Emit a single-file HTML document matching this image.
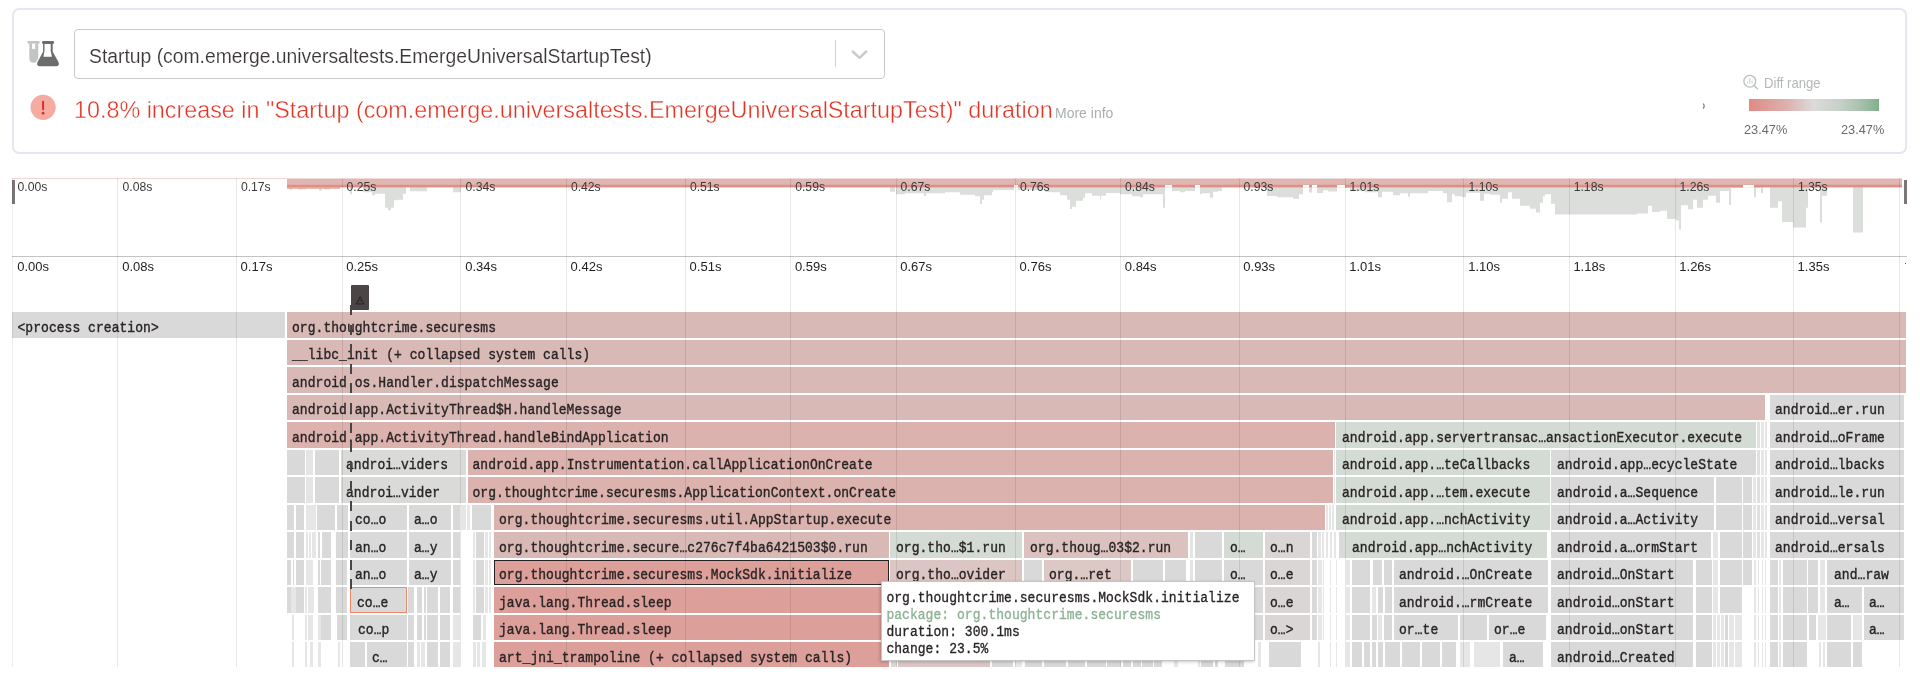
<!DOCTYPE html>
<html><head><meta charset="utf-8">
<style>
*{box-sizing:border-box}
html,body{margin:0;padding:0;background:#fff}
body{width:1920px;height:675px;overflow:hidden;position:relative;font-family:"Liberation Sans",sans-serif}
#root{position:absolute;left:0;top:0;width:1920px;height:675px;overflow:hidden;will-change:transform}
.abs{position:absolute}
.b{position:absolute;height:25.5px;overflow:hidden}
.ml{position:absolute;top:179.5px;font-size:12.2px;line-height:14px;color:#3a3a3a;white-space:pre}
.tl{position:absolute;top:259px;font-size:13px;line-height:16px;color:#222;white-space:pre}
.tt{position:absolute;left:886.4px;font-family:"Liberation Mono",monospace;font-size:13px;line-height:17.3px;color:#2a2525;white-space:pre;letter-spacing:0.045px;-webkit-text-stroke:0.3px currentColor;transform:scaleY(1.1);transform-origin:0 13px}
.b span{position:absolute;top:3.6px;letter-spacing:0.045px;-webkit-text-stroke:0.35px #2a2525;line-height:25.5px;transform:scaleY(1.12);transform-origin:0 19px;font-family:"Liberation Mono",monospace;font-size:13px;color:#2a2525;white-space:pre}
</style></head><body><div id="root">
<!-- header card -->
<div class="abs" style="left:12px;top:8px;width:1895px;height:145.5px;border:2px solid #e2e7f0;border-radius:7px;background:#fff"></div>
<div class="abs" style="left:73.5px;top:29px;width:811px;height:49.5px;border:1.3px solid #c9c9c9;border-radius:4px;background:#fff"></div>
<div class="abs" style="left:88.5px;top:43px;font-size:20px;line-height:26px;color:#3b3737;white-space:pre;-webkit-text-stroke:0.15px #fff;transform:scaleX(0.966);transform-origin:0 0">Startup (com.emerge.universaltests.EmergeUniversalStartupTest)</div>
<div class="abs" style="left:835px;top:40px;width:1.3px;height:27px;background:#cfcfcf"></div>
<svg class="abs" style="left:850px;top:48px" width="20" height="14"><path d="M2.8 3.5 L9.5 9.8 L16.2 3.5" fill="none" stroke="#cbcbcb" stroke-width="2.5" stroke-linecap="round" stroke-linejoin="round"/></svg>
<div class="abs" style="left:74px;top:95px;font-size:24px;line-height:30px;color:#e23424;white-space:pre;-webkit-text-stroke:0.4px #fff;transform:scaleX(0.972);transform-origin:0 0">10.8% increase in "Startup (com.emerge.universaltests.EmergeUniversalStartupTest)" duration</div>
<div class="abs" style="left:1055px;top:104px;font-size:14px;line-height:18px;color:#a9aeae;white-space:pre;transform:scaleX(1.0);transform-origin:0 0">More info</div>
<svg class="abs" style="left:22px;top:34px" width="44" height="38" viewBox="0 0 44 38">
<rect x="5.4" y="7" width="12.3" height="2.7" rx="1.2" fill="#c3c5c5"/>
<path d="M7.3 9.6 L16.3 9.6 L16.3 24.5 Q16.3 28.7 11.8 28.7 Q7.3 28.7 7.3 24.5 Z" fill="#c3c5c5"/>
<rect x="10.1" y="9.6" width="3.1" height="5.3" fill="#fff"/>
<path d="M21.1 9.8 L30.7 9.8 L30.7 17.7 L36.6 28.2 Q37.8 32.2 34 32.2 L18 32.2 Q14.2 32.2 15.4 28.2 L21.1 17.7 Z" fill="#fff" stroke="#fff" stroke-width="2.4"/>
<path d="M21.1 9.8 L30.7 9.8 L30.7 17.7 L36.6 28.2 Q37.8 32.2 34 32.2 L18 32.2 Q14.2 32.2 15.4 28.2 L21.1 17.7 Z" fill="#6b6c6d"/>
<rect x="20" y="7" width="12.1" height="2.9" rx="1.3" fill="#6b6c6d"/>
<path d="M22.5 9.9 L28.7 9.9 L28.7 17 L29.9 22.8 L21.4 22.8 L22.5 17 Z" fill="#fff"/>
</svg>
<svg class="abs" style="left:26px;top:90px" width="36" height="34">
<circle cx="17.1" cy="17.3" r="12.6" fill="#f5aaa2"/>
<path d="M17.1 11.6 L17.1 19.2" stroke="#e3281c" stroke-width="1.9" stroke-linecap="round"/>
<circle cx="17.1" cy="23.2" r="1.35" fill="#e3281c"/>
</svg>
<svg class="abs" style="left:1690px;top:66px" width="210" height="50">
<circle cx="59.8" cy="15.2" r="5.9" fill="none" stroke="#b9c0bd" stroke-width="1.3"/>
<path d="M64 19.5 L67.5 22.7" stroke="#b9c0bd" stroke-width="1.5" stroke-linecap="round"/>
<path d="M59.8 12 L59.8 17.5 M57.5 15.5 L57.5 17.5 M62 14.5 L62 17.5" stroke="#c8cecb" stroke-width="1"/>
<path d="M13.2 37.5 Q15.3 40 13.2 42.6" fill="none" stroke="#7a7a7a" stroke-width="1.1"/>
</svg>
<div class="abs" style="left:1763.5px;top:72.7px;font-size:14.5px;line-height:20px;color:#b3b8b7;white-space:pre;transform:scaleX(0.904);transform-origin:0 0">Diff range</div>
<div class="abs" style="left:1748.6px;top:98.9px;width:130.6px;height:12.5px;background:linear-gradient(to right,#e08a83 0%,#dcb3b0 30%,#dcdbda 50%,#c6d0c8 70%,#aac2ae 85%,#82b08b 100%)"></div>
<div class="abs" style="left:1743.5px;top:121px;font-size:13.3px;line-height:18px;color:#6a6a6a;white-space:pre;transform:scaleX(0.96);transform-origin:0 0">23.47%</div>
<div class="abs" style="left:1840.8px;top:121px;font-size:13.3px;line-height:18px;color:#6a6a6a;white-space:pre;transform:scaleX(0.96);transform-origin:0 0">23.47%</div>
<svg class="abs" style="left:0;top:0" width="1920" height="260">
<path d="M287 186 H300 V188.8 H287 Z M300 186 H305 V188.2 H300 Z M305 186 H319 V188.8 H305 Z M319 186 H322 V190.4 H319 Z M322 186 H340 V188.5 H322 Z M350 186 H352 V194.3 H350 Z M363 186 H372 V192.3 H363 Z M372 186 H375 V195.3 H372 Z M375 186 H385 V193.8 H375 Z M385 186 H388 V207.7 H385 Z M388 186 H391 V210.2 H388 Z M391 186 H394 V207.7 H391 Z M394 186 H398 V200.3 H394 Z M398 186 H403 V199.8 H398 Z M403 186 H406 V193.8 H403 Z M410 186 H427 V191.3 H410 Z M453 186 H461 V192.3 H453 Z M890 186 H895 V191.8 H890 Z M896 186 H905 V194.3 H896 Z M905 186 H924 V193.3 H905 Z M924 186 H926 V196 H924 Z M926 186 H945 V193.3 H926 Z M945 186 H960 V192.3 H945 Z M960 186 H975 V194.8 H960 Z M975 186 H980 V196.3 H975 Z M980 186 H982 V204 H980 Z M982 186 H984 V199.8 H982 Z M984 186 H992 V195.3 H984 Z M992 186 H993 V192.3 H992 Z M993 186 H1014 V189.9 H993 Z M1018 186 H1045 V189.9 H1018 Z M1045 186 H1050 V192 H1045 Z M1050 186 H1060 V192.3 H1050 Z M1060 186 H1067 V195.3 H1060 Z M1067 186 H1070 V199.8 H1067 Z M1070 186 H1072 V209 H1070 Z M1072 186 H1076 V206.7 H1072 Z M1076 186 H1083 V200.8 H1076 Z M1083 186 H1085 V197.8 H1083 Z M1085 186 H1092 V193.3 H1085 Z M1092 186 H1100 V195.8 H1092 Z M1100 186 H1101 V199 H1100 Z M1101 186 H1106 V195.8 H1101 Z M1106 186 H1120 V193 H1106 Z M1120 186 H1132 V194.3 H1120 Z M1132 186 H1140 V196.3 H1132 Z M1140 186 H1143 V197.3 H1140 Z M1143 186 H1163 V194.3 H1143 Z M1163 186 H1165 V207.7 H1163 Z M1172 186 H1180 V190.9 H1172 Z M1180 186 H1185 V192.3 H1180 Z M1185 186 H1195 V190.9 H1185 Z M1200 186 H1202 V194.3 H1200 Z M1202 186 H1210 V193.3 H1202 Z M1210 186 H1213 V197.8 H1210 Z M1213 186 H1218 V191.8 H1213 Z M1218 186 H1222 V190.9 H1218 Z M1267 186 H1277 V196 H1267 Z M1277 186 H1293 V197.3 H1277 Z M1293 186 H1299 V198.7 H1293 Z M1299 186 H1303 V194.2 H1299 Z M1309 186 H1312 V192.4 H1309 Z M1317 186 H1323 V192.9 H1317 Z M1323 186 H1328 V190.2 H1323 Z M1328 186 H1337 V191.5 H1328 Z M1345 186 H1350 V188 H1345 Z M1350 186 H1365 V190.9 H1350 Z M1365 186 H1378 V192.3 H1365 Z M1378 186 H1382 V197.3 H1378 Z M1382 186 H1393 V191.8 H1382 Z M1393 186 H1400 V195.3 H1393 Z M1400 186 H1408 V193.3 H1400 Z M1408 186 H1410 V196.8 H1408 Z M1410 186 H1428 V193.3 H1410 Z M1428 186 H1443 V190.9 H1428 Z M1443 186 H1447 V193.3 H1443 Z M1447 186 H1452 V202.2 H1447 Z M1452 186 H1455 V194.3 H1452 Z M1455 186 H1462 V196.3 H1455 Z M1462 186 H1466 V197.3 H1462 Z M1466 186 H1480 V192.8 H1466 Z M1480 186 H1484 V200.8 H1480 Z M1484 186 H1490 V193.8 H1484 Z M1490 186 H1500 V194.8 H1490 Z M1500 186 H1502 V202.7 H1500 Z M1502 186 H1508 V198.8 H1502 Z M1508 186 H1512 V192.3 H1508 Z M1512 186 H1520 V198.8 H1512 Z M1520 186 H1530 V205.7 H1520 Z M1530 186 H1536 V208.7 H1530 Z M1536 186 H1540 V212.6 H1536 Z M1540 186 H1543 V202.7 H1540 Z M1543 186 H1545 V196.3 H1543 Z M1545 186 H1551 V194.3 H1545 Z M1551 186 H1555 V203.7 H1551 Z M1555 186 H1637 V214.6 H1555 Z M1637 186 H1648 V213.6 H1637 Z M1648 186 H1652 V205.7 H1648 Z M1652 186 H1660 V212.1 H1652 Z M1660 186 H1667 V210.7 H1660 Z M1667 186 H1676 V219 H1667 Z M1676 186 H1679 V220.5 H1676 Z M1679 186 H1681 V229.5 H1679 Z M1681 186 H1688 V205.2 H1681 Z M1688 186 H1693 V209.2 H1688 Z M1693 186 H1697 V199.8 H1693 Z M1697 186 H1703 V207.7 H1697 Z M1703 186 H1708 V199.8 H1703 Z M1708 186 H1716 V195.8 H1708 Z M1716 186 H1720 V202.7 H1716 Z M1720 186 H1729 V190.9 H1720 Z M1729 186 H1731 V205 H1729 Z M1731 186 H1743 V188 H1731 Z M1754 186 H1756 V197.3 H1754 Z M1756 186 H1760 V188 H1756 Z M1761 186 H1763 V193.3 H1761 Z M1770 186 H1778 V207.7 H1770 Z M1778 186 H1782 V201.2 H1778 Z M1782 186 H1793 V222 H1782 Z M1793 186 H1806 V227.5 H1793 Z M1806 186 H1808 V207.7 H1806 Z M1808 186 H1820 V188 H1808 Z M1820 186 H1822 V222.5 H1820 Z M1822 186 H1827 V195.8 H1822 Z M1853 186 H1863 V232.4 H1853 Z " fill="#dcdedc"/>
<rect x="287" y="178.5" width="1615" height="6.8" fill="#e0b6b3"/>
<rect x="287" y="184.8" width="1615" height="2.6" fill="#e08f86"/>
<rect x="287" y="187.3" width="53" height="1.3" fill="#e6a29b"/><rect x="289" y="188.4" width="3" height="0.9" fill="#e6a29b"/><rect x="298" y="188.4" width="8" height="0.8" fill="#e6a29b"/><rect x="324" y="188.4" width="6" height="0.8" fill="#e6a29b"/>
<rect x="12" y="178" width="275" height="1" fill="#f2d6d3"/>
<rect x="1014" y="185" width="4" height="2.6" fill="#fff"/><rect x="1165" y="185" width="7" height="2.6" fill="#fff"/><rect x="1195" y="185" width="5" height="2.6" fill="#fff"/><rect x="1303" y="185" width="6" height="2.6" fill="#fff"/><rect x="1312" y="185" width="5" height="2.6" fill="#fff"/><rect x="1337" y="185" width="8" height="2.6" fill="#fff"/><rect x="1743" y="185" width="11" height="2.6" fill="#fff"/>
</svg>
<div class="ml" style="left:17.5px">0.00s</div><div class="ml" style="left:122.5px">0.08s</div><div class="ml" style="left:240.9px">0.17s</div><div class="ml" style="left:346.5px">0.25s</div><div class="ml" style="left:465.5px">0.34s</div><div class="ml" style="left:570.9px">0.42s</div><div class="ml" style="left:689.9px">0.51s</div><div class="ml" style="left:795.1999999999999px">0.59s</div><div class="ml" style="left:900.5px">0.67s</div><div class="ml" style="left:1019.9px">0.76s</div><div class="ml" style="left:1125.1000000000001px">0.84s</div><div class="ml" style="left:1243.6000000000001px">0.93s</div><div class="ml" style="left:1349.5px">1.01s</div><div class="ml" style="left:1468.5px">1.10s</div><div class="ml" style="left:1573.7px">1.18s</div><div class="ml" style="left:1679.6000000000001px">1.26s</div><div class="ml" style="left:1797.9px">1.35s</div>
<div class="abs" style="left:12px;top:255.5px;width:1895px;height:1.2px;background:#c3c3c3"></div>
<div class="tl" style="left:17.2px">0.00s</div><div class="tl" style="left:122.19999999999999px">0.08s</div><div class="tl" style="left:240.6px">0.17s</div><div class="tl" style="left:346.20000000000005px">0.25s</div><div class="tl" style="left:465.20000000000005px">0.34s</div><div class="tl" style="left:570.6px">0.42s</div><div class="tl" style="left:689.6px">0.51s</div><div class="tl" style="left:794.9px">0.59s</div><div class="tl" style="left:900.2px">0.67s</div><div class="tl" style="left:1019.6px">0.76s</div><div class="tl" style="left:1124.8px">0.84s</div><div class="tl" style="left:1243.3px">0.93s</div><div class="tl" style="left:1349.1999999999998px">1.01s</div><div class="tl" style="left:1468.1999999999998px">1.10s</div><div class="tl" style="left:1573.3999999999999px">1.18s</div><div class="tl" style="left:1679.3px">1.26s</div><div class="tl" style="left:1797.6px">1.35s</div>
<div class="abs" style="left:12px;top:179.5px;width:3px;height:24px;background:#7a7676"></div>
<div class="abs" style="left:1904.8px;top:262.5px;width:1.6px;height:1.4px;background:#555"></div>
<div class="abs" style="left:1903.5px;top:179.5px;width:3px;height:24px;background:#7a7676"></div>
<div class="abs" style="left:0;top:312px;width:1920px;height:355px;overflow:hidden">
<div class="abs" style="left:0;top:-312px;width:1920px;height:700px">
<div class="b" style="left:12px;top:312.0px;width:273px;background:#d9d9d9;"><span style="left:5.5px">&lt;process creation&gt;</span></div><div class="b" style="left:287px;top:312.0px;width:1618.5px;background:#d9b9b6;"><span style="left:5px">org.thoughtcrime.securesms</span></div><div class="b" style="left:287px;top:339.5px;width:1618.5px;background:#d9b9b6;"><span style="left:5px">__libc_init (+ collapsed system calls)</span></div><div class="b" style="left:287px;top:367.0px;width:1618.5px;background:#d9b9b6;"><span style="left:5px">android.os.Handler.dispatchMessage</span></div><div class="b" style="left:287px;top:394.5px;width:1478px;background:#d9b9b6;"><span style="left:5px">android.app.ActivityThread$H.handleMessage</span></div><div class="b" style="left:1769.5px;top:394.5px;width:134.5px;background:#d9d9d9;"><span style="left:5.5px">android…er.run</span></div><div class="b" style="left:287px;top:422.0px;width:1048px;background:#dbb2ad;"><span style="left:5px">android.app.ActivityThread.handleBindApplication</span></div><div class="b" style="left:1335.5px;top:422.0px;width:420.5px;background:#d4dbd5;"><span style="left:6.5px">android.app.servertransac…ansactionExecutor.execute</span></div><div class="b" style="left:1769.5px;top:422.0px;width:134.5px;background:#d9d9d9;"><span style="left:5.5px">android…oFrame</span></div><div class="b" style="left:287px;top:449.5px;width:18px;background:#d9d9d9;"></div><div class="b" style="left:306px;top:449.5px;width:7px;background:#e4e4e4;"></div><div class="b" style="left:315px;top:449.5px;width:24px;background:#d9d9d9;"></div><div class="b" style="left:340.5px;top:449.5px;width:125.5px;background:#dadbd9;"><span style="left:5.5px">androi…viders</span></div><div class="b" style="left:287px;top:477.0px;width:18px;background:#d9d9d9;"></div><div class="b" style="left:306px;top:477.0px;width:7px;background:#e4e4e4;"></div><div class="b" style="left:315px;top:477.0px;width:24px;background:#d9d9d9;"></div><div class="b" style="left:340.5px;top:477.0px;width:125.5px;background:#dadbd9;"><span style="left:5.5px">androi…vider</span></div><div class="b" style="left:467.5px;top:449.5px;width:865.5px;background:#dbb2ad;"><span style="left:5.0px">android.app.Instrumentation.callApplicationOnCreate</span></div><div class="b" style="left:467.5px;top:477.0px;width:865.5px;background:#dbb2ad;"><span style="left:5.0px">org.thoughtcrime.securesms.ApplicationContext.onCreate</span></div><div class="b" style="left:1335.5px;top:449.5px;width:214.0px;background:#d4dbd5;"><span style="left:6.5px">android.app.…teCallbacks</span></div><div class="b" style="left:1335.5px;top:477.0px;width:214.0px;background:#d4dbd5;"><span style="left:6.5px">android.app.…tem.execute</span></div><div class="b" style="left:1335.5px;top:504.5px;width:214.0px;background:#d4dbd5;"><span style="left:6.5px">android.app.…nchActivity</span></div><div class="b" style="left:1550.8px;top:449.5px;width:205.20000000000005px;background:#d9d9d9;"><span style="left:6.2000000000000455px">android.app…ecycleState</span></div><div class="b" style="left:1550.8px;top:477.0px;width:163.20000000000005px;background:#d9d9d9;"><span style="left:6.2000000000000455px">android.a…Sequence</span></div><div class="b" style="left:1550.8px;top:504.5px;width:163.20000000000005px;background:#d9d9d9;"><span style="left:6.2000000000000455px">android.a…Activity</span></div><div class="b" style="left:1550.8px;top:532.0px;width:160.20000000000005px;background:#d9d9d9;"><span style="left:6.2000000000000455px">android.a…ormStart</span></div><div class="b" style="left:1550.8px;top:559.5px;width:142.70000000000005px;background:#d9d9d9;"><span style="left:6.2000000000000455px">android…OnStart</span></div><div class="b" style="left:1550.8px;top:587.0px;width:142.70000000000005px;background:#d9d9d9;"><span style="left:6.2000000000000455px">android…onStart</span></div><div class="b" style="left:1550.8px;top:614.5px;width:142.70000000000005px;background:#d9d9d9;"><span style="left:6.2000000000000455px">android…onStart</span></div><div class="b" style="left:1550.8px;top:642.0px;width:142.70000000000005px;background:#d9d9d9;"><span style="left:6.2000000000000455px">android…Created</span></div><div class="b" style="left:1769.5px;top:449.5px;width:134.5px;background:#d9d9d9;"><span style="left:5.5px">android…lbacks</span></div><div class="b" style="left:1769.5px;top:477.0px;width:134.5px;background:#d9d9d9;"><span style="left:5.5px">android…le.run</span></div><div class="b" style="left:1769.5px;top:504.5px;width:134.5px;background:#d9d9d9;"><span style="left:5.5px">android…versal</span></div><div class="b" style="left:1769.5px;top:532.0px;width:134.5px;background:#d9d9d9;"><span style="left:5.5px">android…ersals</span></div><div class="b" style="left:1827px;top:559.5px;width:77px;background:#d9d9d9;"><span style="left:7px">and…raw</span></div><div class="b" style="left:1827px;top:587.0px;width:35px;background:#d9d9d9;"><span style="left:7px">a…</span></div><div class="b" style="left:1863.5px;top:587.0px;width:40.5px;background:#d9d9d9;"><span style="left:5.5px">a…</span></div><div class="b" style="left:1863.5px;top:614.5px;width:40.5px;background:#d9d9d9;"><span style="left:5.5px">a…</span></div><div class="b" style="left:287px;top:504.5px;width:7px;background:#d9d9d9;"></div><div class="b" style="left:296px;top:504.5px;width:8px;background:#d9d9d9;"></div><div class="b" style="left:306px;top:504.5px;width:9.5px;background:#e6e6e6;"></div><div class="b" style="left:316.5px;top:504.5px;width:18.5px;background:#d9d9d9;"></div><div class="b" style="left:337px;top:504.5px;width:11px;background:#d9d9d9;"></div><div class="b" style="left:287px;top:532.0px;width:7px;background:#d9d9d9;"></div><div class="b" style="left:296px;top:532.0px;width:8px;background:#d9d9d9;"></div><div class="b" style="left:305.5px;top:532.0px;width:2.5px;background:#e6e6e6;"></div><div class="b" style="left:309px;top:532.0px;width:2px;background:#e6e6e6;"></div><div class="b" style="left:312px;top:532.0px;width:4px;background:#e6e6e6;"></div><div class="b" style="left:318px;top:532.0px;width:2px;background:#d9d9d9;"></div><div class="b" style="left:321.8px;top:532.0px;width:9.399999999999977px;background:#d9d9d9;"></div><div class="b" style="left:336px;top:532.0px;width:12px;background:#d9d9d9;"></div><div class="b" style="left:287px;top:559.5px;width:3.5px;background:#d9d9d9;"></div><div class="b" style="left:292.5px;top:559.5px;width:1.5px;background:#d9d9d9;"></div><div class="b" style="left:296px;top:559.5px;width:8px;background:#d9d9d9;"></div><div class="b" style="left:306px;top:559.5px;width:7px;background:#e6e6e6;"></div><div class="b" style="left:318px;top:559.5px;width:2px;background:#d9d9d9;"></div><div class="b" style="left:321px;top:559.5px;width:10px;background:#d9d9d9;"></div><div class="b" style="left:336px;top:559.5px;width:11px;background:#d9d9d9;"></div><div class="b" style="left:287px;top:587.0px;width:4px;background:#d9d9d9;"></div><div class="b" style="left:291px;top:587.0px;width:5px;background:#e6e6e6;"></div><div class="b" style="left:296px;top:587.0px;width:8px;background:#d9d9d9;"></div><div class="b" style="left:305px;top:587.0px;width:1.5px;background:#e6e6e6;"></div><div class="b" style="left:308px;top:587.0px;width:6px;background:#e6e6e6;"></div><div class="b" style="left:318px;top:587.0px;width:13.199999999999989px;background:#d9d9d9;"></div><div class="b" style="left:336px;top:587.0px;width:11px;background:#d9d9d9;"></div><div class="b" style="left:292px;top:614.5px;width:1.5px;background:#e6e6e6;"></div><div class="b" style="left:305px;top:614.5px;width:1.5px;background:#e6e6e6;"></div><div class="b" style="left:308px;top:614.5px;width:5px;background:#e6e6e6;"></div><div class="b" style="left:318px;top:614.5px;width:3px;background:#e6e6e6;"></div><div class="b" style="left:321px;top:614.5px;width:10px;background:#d9d9d9;"></div><div class="b" style="left:337px;top:614.5px;width:10px;background:#d9d9d9;"></div><div class="b" style="left:292px;top:642.0px;width:1.5px;background:#e6e6e6;"></div><div class="b" style="left:305px;top:642.0px;width:1.5px;background:#e6e6e6;"></div><div class="b" style="left:310px;top:642.0px;width:3px;background:#e6e6e6;"></div><div class="b" style="left:318px;top:642.0px;width:3px;background:#e6e6e6;"></div><div class="b" style="left:338px;top:642.0px;width:2px;background:#e6e6e6;"></div><div class="b" style="left:349.5px;top:504.5px;width:57.5px;background:#d9d9d9;"><span style="left:5.5px">co…o</span></div><div class="b" style="left:408.5px;top:504.5px;width:42.5px;background:#d9d9d9;"><span style="left:5.5px">a…o</span></div><div class="b" style="left:349.5px;top:532.0px;width:57.5px;background:#d9d9d9;"><span style="left:5.5px">an…o</span></div><div class="b" style="left:408.5px;top:532.0px;width:42.5px;background:#d9d9d9;"><span style="left:5.5px">a…y</span></div><div class="b" style="left:349.5px;top:559.5px;width:57.5px;background:#d9d9d9;"><span style="left:5.5px">an…o</span></div><div class="b" style="left:408.5px;top:559.5px;width:42.5px;background:#d9d9d9;"><span style="left:5.5px">a…y</span></div><div class="b" style="left:349.5px;top:587.0px;width:57.5px;background:#d9d9d9;outline:1.8px solid #f2876c;outline-offset:-1px;"><span style="left:7.5px">co…e</span></div><div class="b" style="left:349.5px;top:614.5px;width:57.5px;background:#d9d9d9;"><span style="left:8.5px">co…p</span></div><div class="b" style="left:349.5px;top:642.0px;width:15.5px;background:#d9d9d9;"></div><div class="b" style="left:367px;top:642.0px;width:40px;background:#d9d9d9;"><span style="left:5px">c…</span></div><div class="b" style="left:408.2px;top:587.0px;width:5.900000000000034px;background:#d9d9d9;"></div><div class="b" style="left:416.5px;top:587.0px;width:5.199999999999989px;background:#d9d9d9;"></div><div class="b" style="left:423.5px;top:587.0px;width:2.0px;background:#d9d9d9;"></div><div class="b" style="left:427px;top:587.0px;width:11.399999999999977px;background:#d9d9d9;"></div><div class="b" style="left:440.3px;top:587.0px;width:9.800000000000011px;background:#d9d9d9;"></div><div class="b" style="left:408.2px;top:614.5px;width:5.900000000000034px;background:#d9d9d9;"></div><div class="b" style="left:416.5px;top:614.5px;width:5.199999999999989px;background:#d9d9d9;"></div><div class="b" style="left:423.5px;top:614.5px;width:2.0px;background:#d9d9d9;"></div><div class="b" style="left:427px;top:614.5px;width:11.399999999999977px;background:#d9d9d9;"></div><div class="b" style="left:440.3px;top:614.5px;width:9.800000000000011px;background:#d9d9d9;"></div><div class="b" style="left:408.2px;top:642.0px;width:5.900000000000034px;background:#d9d9d9;"></div><div class="b" style="left:416.5px;top:642.0px;width:3.5px;background:#e6e6e6;"></div><div class="b" style="left:421px;top:642.0px;width:4px;background:#e6e6e6;"></div><div class="b" style="left:427px;top:642.0px;width:11.399999999999977px;background:#d9d9d9;"></div><div class="b" style="left:440.3px;top:642.0px;width:9.800000000000011px;background:#d9d9d9;"></div><div class="b" style="left:452.9px;top:504.5px;width:6.900000000000034px;background:#d9d9d9;"></div><div class="b" style="left:452.9px;top:532.0px;width:6.900000000000034px;background:#d9d9d9;"></div><div class="b" style="left:452.9px;top:559.5px;width:6.900000000000034px;background:#d9d9d9;"></div><div class="b" style="left:452.9px;top:587.0px;width:6.900000000000034px;background:#d9d9d9;"></div><div class="b" style="left:452.9px;top:614.5px;width:6.900000000000034px;background:#e6e6e6;"></div><div class="b" style="left:452.9px;top:642.0px;width:6.900000000000034px;background:#e6e6e6;"></div><div class="b" style="left:461px;top:504.5px;width:4.5px;background:#e6e6e6;"></div><div class="b" style="left:466.8px;top:504.5px;width:3.6999999999999886px;background:#e6e6e6;"></div><div class="b" style="left:471.8px;top:504.5px;width:18.899999999999977px;background:#d9d9d9;"></div><div class="b" style="left:473px;top:532.0px;width:2px;background:#e6e6e6;"></div><div class="b" style="left:475.6px;top:532.0px;width:8.799999999999955px;background:#d9d9d9;"></div><div class="b" style="left:485px;top:532.0px;width:2.5px;background:#e6e6e6;"></div><div class="b" style="left:489px;top:532.0px;width:2px;background:#e6e6e6;"></div><div class="b" style="left:473px;top:559.5px;width:2px;background:#e6e6e6;"></div><div class="b" style="left:475.6px;top:559.5px;width:8.799999999999955px;background:#d9d9d9;"></div><div class="b" style="left:485px;top:559.5px;width:2.5px;background:#e6e6e6;"></div><div class="b" style="left:489px;top:559.5px;width:2px;background:#e6e6e6;"></div><div class="b" style="left:473px;top:587.0px;width:2px;background:#e6e6e6;"></div><div class="b" style="left:475.6px;top:587.0px;width:8.799999999999955px;background:#d9d9d9;"></div><div class="b" style="left:485px;top:587.0px;width:2.5px;background:#e6e6e6;"></div><div class="b" style="left:489px;top:587.0px;width:2px;background:#e6e6e6;"></div><div class="b" style="left:473px;top:614.5px;width:8px;background:#d9d9d9;"></div><div class="b" style="left:482.5px;top:614.5px;width:3.5px;background:#e6e6e6;"></div><div class="b" style="left:473px;top:642.0px;width:3px;background:#e6e6e6;"></div><div class="b" style="left:477px;top:642.0px;width:3px;background:#e6e6e6;"></div><div class="b" style="left:482px;top:642.0px;width:4px;background:#e6e6e6;"></div><div class="b" style="left:1757px;top:422.0px;width:3px;background:#e0e0e0;"></div><div class="b" style="left:1761px;top:422.0px;width:3px;background:#e6e6e6;"></div><div class="b" style="left:1765px;top:422.0px;width:1.5px;background:#e6e6e6;"></div><div class="b" style="left:1757px;top:449.5px;width:3px;background:#e0e0e0;"></div><div class="b" style="left:1761px;top:449.5px;width:3px;background:#e6e6e6;"></div><div class="b" style="left:1765px;top:449.5px;width:1.5px;background:#e6e6e6;"></div><div class="b" style="left:1757px;top:477.0px;width:3px;background:#e0e0e0;"></div><div class="b" style="left:1761px;top:477.0px;width:3px;background:#e6e6e6;"></div><div class="b" style="left:1765px;top:477.0px;width:1.5px;background:#e6e6e6;"></div><div class="b" style="left:1757px;top:504.5px;width:3px;background:#e0e0e0;"></div><div class="b" style="left:1761px;top:504.5px;width:3px;background:#e6e6e6;"></div><div class="b" style="left:1765px;top:504.5px;width:1.5px;background:#e6e6e6;"></div><div class="b" style="left:1757px;top:532.0px;width:3px;background:#e0e0e0;"></div><div class="b" style="left:1761px;top:532.0px;width:3px;background:#e6e6e6;"></div><div class="b" style="left:1765px;top:532.0px;width:1.5px;background:#e6e6e6;"></div><div class="b" style="left:1716px;top:477.0px;width:25.5px;background:#d9d9d9;"></div><div class="b" style="left:1743px;top:477.0px;width:9px;background:#d9d9d9;"></div><div class="b" style="left:1753px;top:477.0px;width:3px;background:#e6e6e6;"></div><div class="b" style="left:1716px;top:504.5px;width:25.5px;background:#d9d9d9;"></div><div class="b" style="left:1743px;top:504.5px;width:9px;background:#d9d9d9;"></div><div class="b" style="left:1753px;top:504.5px;width:3px;background:#e6e6e6;"></div><div class="b" style="left:1713px;top:532.0px;width:5px;background:#e6e6e6;"></div><div class="b" style="left:1720px;top:532.0px;width:21.5px;background:#d9d9d9;"></div><div class="b" style="left:1743px;top:532.0px;width:9px;background:#d9d9d9;"></div><div class="b" style="left:1753px;top:532.0px;width:3px;background:#e6e6e6;"></div><div class="b" style="left:1695.5px;top:559.5px;width:16.0px;background:#d9d9d9;"></div><div class="b" style="left:1713px;top:559.5px;width:5px;background:#e6e6e6;"></div><div class="b" style="left:1720px;top:559.5px;width:21.5px;background:#d9d9d9;"></div><div class="b" style="left:1743px;top:559.5px;width:9px;background:#d9d9d9;"></div><div class="b" style="left:1695.5px;top:587.0px;width:16.0px;background:#d9d9d9;"></div><div class="b" style="left:1713px;top:587.0px;width:5px;background:#e6e6e6;"></div><div class="b" style="left:1720px;top:587.0px;width:21.5px;background:#d9d9d9;"></div><div class="b" style="left:1695.5px;top:614.5px;width:16.0px;background:#d9d9d9;"></div><div class="b" style="left:1713px;top:614.5px;width:3px;background:#e6e6e6;"></div><div class="b" style="left:1717px;top:614.5px;width:3px;background:#e6e6e6;"></div><div class="b" style="left:1721px;top:614.5px;width:3px;background:#e6e6e6;"></div><div class="b" style="left:1725px;top:614.5px;width:3px;background:#d9d9d9;"></div><div class="b" style="left:1729px;top:614.5px;width:5px;background:#e6e6e6;"></div><div class="b" style="left:1735px;top:614.5px;width:6.5px;background:#e6e6e6;"></div><div class="b" style="left:1695.5px;top:642.0px;width:16.0px;background:#d9d9d9;"></div><div class="b" style="left:1713px;top:642.0px;width:3px;background:#e6e6e6;"></div><div class="b" style="left:1717px;top:642.0px;width:3px;background:#e6e6e6;"></div><div class="b" style="left:1721px;top:642.0px;width:3px;background:#e6e6e6;"></div><div class="b" style="left:1725px;top:642.0px;width:3px;background:#d9d9d9;"></div><div class="b" style="left:1729px;top:642.0px;width:5px;background:#e6e6e6;"></div><div class="b" style="left:1735px;top:642.0px;width:6.5px;background:#e6e6e6;"></div><div class="b" style="left:1754px;top:559.5px;width:1.5px;background:#e6e6e6;"></div><div class="b" style="left:1758px;top:559.5px;width:1px;background:#e6e6e6;"></div><div class="b" style="left:1762px;top:559.5px;width:1px;background:#e6e6e6;"></div><div class="b" style="left:1765px;top:559.5px;width:1px;background:#e6e6e6;"></div><div class="b" style="left:1754px;top:587.0px;width:1.5px;background:#e6e6e6;"></div><div class="b" style="left:1758px;top:587.0px;width:1px;background:#e6e6e6;"></div><div class="b" style="left:1762px;top:587.0px;width:1px;background:#e6e6e6;"></div><div class="b" style="left:1765px;top:587.0px;width:1px;background:#e6e6e6;"></div><div class="b" style="left:1754px;top:614.5px;width:1.5px;background:#e6e6e6;"></div><div class="b" style="left:1758px;top:614.5px;width:1px;background:#e6e6e6;"></div><div class="b" style="left:1762px;top:614.5px;width:1px;background:#e6e6e6;"></div><div class="b" style="left:1765px;top:614.5px;width:1px;background:#e6e6e6;"></div><div class="b" style="left:1754px;top:642.0px;width:1.5px;background:#e6e6e6;"></div><div class="b" style="left:1758px;top:642.0px;width:1px;background:#e6e6e6;"></div><div class="b" style="left:1762px;top:642.0px;width:1px;background:#e6e6e6;"></div><div class="b" style="left:1765px;top:642.0px;width:1px;background:#e6e6e6;"></div><div class="b" style="left:1770px;top:559.5px;width:8px;background:#d9d9d9;"></div><div class="b" style="left:1779px;top:559.5px;width:2px;background:#e6e6e6;"></div><div class="b" style="left:1782.5px;top:559.5px;width:24.0px;background:#d9d9d9;"></div><div class="b" style="left:1770px;top:587.0px;width:8px;background:#d9d9d9;"></div><div class="b" style="left:1779px;top:587.0px;width:2px;background:#e6e6e6;"></div><div class="b" style="left:1782.5px;top:587.0px;width:24.0px;background:#d9d9d9;"></div><div class="b" style="left:1770px;top:614.5px;width:8px;background:#d9d9d9;"></div><div class="b" style="left:1779px;top:614.5px;width:2px;background:#e6e6e6;"></div><div class="b" style="left:1782.5px;top:614.5px;width:24.0px;background:#d9d9d9;"></div><div class="b" style="left:1770px;top:642.0px;width:8px;background:#d9d9d9;"></div><div class="b" style="left:1779px;top:642.0px;width:2px;background:#e6e6e6;"></div><div class="b" style="left:1782.5px;top:642.0px;width:24.0px;background:#d9d9d9;"></div><div class="b" style="left:1808px;top:559.5px;width:10px;background:#d9d9d9;"></div><div class="b" style="left:1820px;top:559.5px;width:5px;background:#e6e6e6;"></div><div class="b" style="left:1808px;top:587.0px;width:10px;background:#d9d9d9;"></div><div class="b" style="left:1820px;top:587.0px;width:5px;background:#e6e6e6;"></div><div class="b" style="left:1809px;top:614.5px;width:7px;background:#d9d9d9;"></div><div class="b" style="left:1818px;top:614.5px;width:8px;background:#e6e6e6;"></div><div class="b" style="left:1827px;top:614.5px;width:24px;background:#d9d9d9;"></div><div class="b" style="left:1853px;top:614.5px;width:9px;background:#e6e6e6;"></div><div class="b" style="left:1819px;top:642.0px;width:1.5px;background:#e6e6e6;"></div><div class="b" style="left:1823px;top:642.0px;width:2px;background:#e6e6e6;"></div><div class="b" style="left:1827px;top:642.0px;width:24px;background:#d9d9d9;"></div><div class="b" style="left:1853px;top:642.0px;width:9px;background:#d9d9d9;"></div><div class="b" style="left:494px;top:504.5px;width:831px;background:#dbb2ad;"><span style="left:5px">org.thoughtcrime.securesms.util.AppStartup.execute</span></div><div class="b" style="left:1326px;top:504.5px;width:1.5px;background:#e6e6e6;"></div><div class="b" style="left:1329px;top:504.5px;width:1.5px;background:#e6e6e6;"></div><div class="b" style="left:1332px;top:504.5px;width:2px;background:#e6e6e6;"></div><div class="b" style="left:1333.5px;top:449.5px;width:1.2999999999999545px;background:#e6e6e6;"></div><div class="b" style="left:1333.5px;top:477.0px;width:1.2999999999999545px;background:#e6e6e6;"></div><div class="b" style="left:494px;top:532.0px;width:394.6px;background:#d9b9b6;"><span style="left:5px">org.thoughtcrime.secure…c276c7f4ba6421503$0.run</span></div><div class="b" style="left:494px;top:559.5px;width:394.6px;background:#dd9f9a;outline:1.7px solid #262222;outline-offset:-1.1px;"><span style="left:5px">org.thoughtcrime.securesms.MockSdk.initialize</span></div><div class="b" style="left:494px;top:587.0px;width:394.6px;background:#dd9f9a;"><span style="left:5px">java.lang.Thread.sleep</span></div><div class="b" style="left:494px;top:614.5px;width:394.6px;background:#dd9f9a;"><span style="left:5px">java.lang.Thread.sleep</span></div><div class="b" style="left:494px;top:642.0px;width:394.6px;background:#dd9f9a;"><span style="left:5px">art_jni_trampoline (+ collapsed system calls)</span></div><div class="b" style="left:890.2px;top:532.0px;width:132.29999999999995px;background:#d4dbd5;"><span style="left:5.7999999999999545px">org.tho…$1.run</span></div><div class="b" style="left:1024.2px;top:532.0px;width:163.79999999999995px;background:#dcc2bf;"><span style="left:5.7999999999999545px">org.thoug…03$2.run</span></div><div class="b" style="left:890.2px;top:559.5px;width:132.29999999999995px;background:#dcc6c3;"><span style="left:5.7999999999999545px">org.tho…ovider</span></div><div class="b" style="left:1024.2px;top:559.5px;width:17.799999999999955px;background:#d9d9d9;"></div><div class="b" style="left:1043.6px;top:559.5px;width:87.20000000000005px;background:#dcc9c6;"><span style="left:5.400000000000091px">org.…ret</span></div><div class="b" style="left:1132.5px;top:559.5px;width:30.5px;background:#d9d9d9;"></div><div class="b" style="left:1165px;top:559.5px;width:21px;background:#d9d9d9;"></div><div class="b" style="left:890.2px;top:587.0px;width:132.29999999999995px;background:#dcc6c3;"></div><div class="b" style="left:1024.2px;top:587.0px;width:17.799999999999955px;background:#d9d9d9;"></div><div class="b" style="left:1043.6px;top:587.0px;width:87.20000000000005px;background:#dcc9c6;"></div><div class="b" style="left:1132.5px;top:587.0px;width:30.5px;background:#d9d9d9;"></div><div class="b" style="left:1165px;top:587.0px;width:21px;background:#d9d9d9;"></div><div class="b" style="left:890.2px;top:614.5px;width:132.29999999999995px;background:#dcc6c3;"></div><div class="b" style="left:1024.2px;top:614.5px;width:17.799999999999955px;background:#d9d9d9;"></div><div class="b" style="left:1043.6px;top:614.5px;width:87.20000000000005px;background:#dcc9c6;"></div><div class="b" style="left:1132.5px;top:614.5px;width:30.5px;background:#d9d9d9;"></div><div class="b" style="left:1165px;top:614.5px;width:21px;background:#d9d9d9;"></div><div class="b" style="left:891px;top:642.0px;width:5.600000000000023px;background:#d9d9d9;"></div><div class="b" style="left:898px;top:642.0px;width:92px;background:#dcc6c3;"></div><div class="b" style="left:991.5px;top:642.0px;width:21.5px;background:#d9d9d9;"></div><div class="b" style="left:1015px;top:642.0px;width:7px;background:#e6e6e6;"></div><div class="b" style="left:1025px;top:642.0px;width:17px;background:#d9d9d9;"></div><div class="b" style="left:1044px;top:642.0px;width:22px;background:#d9d9d9;"></div><div class="b" style="left:1067.5px;top:642.0px;width:17.200000000000045px;background:#d9d9d9;"></div><div class="b" style="left:1086.6px;top:642.0px;width:19.100000000000136px;background:#d9d9d9;"></div><div class="b" style="left:1107px;top:642.0px;width:14px;background:#d9d9d9;"></div><div class="b" style="left:1122.5px;top:642.0px;width:8.0px;background:#d9d9d9;"></div><div class="b" style="left:1133px;top:642.0px;width:7.5px;background:#d9d9d9;"></div><div class="b" style="left:1142px;top:642.0px;width:10.5px;background:#d9d9d9;"></div><div class="b" style="left:1154px;top:642.0px;width:8px;background:#d9d9d9;"></div><div class="b" style="left:1174px;top:642.0px;width:4px;background:#e6e6e6;"></div><div class="b" style="left:1198px;top:642.0px;width:2px;background:#e6e6e6;"></div><div class="b" style="left:1201px;top:642.0px;width:12px;background:#d9d9d9;"></div><div class="b" style="left:1215px;top:642.0px;width:3px;background:#d9d9d9;"></div><div class="b" style="left:1225px;top:642.0px;width:19px;background:#d9d9d9;"></div><div class="b" style="left:1257.5px;top:642.0px;width:3.5px;background:#e6e6e6;"></div><div class="b" style="left:1190px;top:532.0px;width:3px;background:#e4e4e4;"></div><div class="b" style="left:1195px;top:532.0px;width:27.299999999999955px;background:#d9d9d9;"></div><div class="b" style="left:1190px;top:559.5px;width:3px;background:#e4e4e4;"></div><div class="b" style="left:1195px;top:559.5px;width:27.299999999999955px;background:#d9d9d9;"></div><div class="b" style="left:1190px;top:587.0px;width:3px;background:#e4e4e4;"></div><div class="b" style="left:1195px;top:587.0px;width:27.299999999999955px;background:#d9d9d9;"></div><div class="b" style="left:1190px;top:614.5px;width:3px;background:#e4e4e4;"></div><div class="b" style="left:1195px;top:614.5px;width:27.299999999999955px;background:#d9d9d9;"></div><div class="b" style="left:1224px;top:532.0px;width:38.700000000000045px;background:#d4dbd5;"><span style="left:6px">o…</span></div><div class="b" style="left:1264.9px;top:532.0px;width:45.09999999999991px;background:#dbd6d6;"><span style="left:5.099999999999909px">o…n</span></div><div class="b" style="left:1224px;top:559.5px;width:38.700000000000045px;background:#d9d9d9;"><span style="left:6px">o…</span></div><div class="b" style="left:1264.9px;top:559.5px;width:45.09999999999991px;background:#dbd6d6;"><span style="left:5.099999999999909px">o…e</span></div><div class="b" style="left:1224px;top:587.0px;width:38.700000000000045px;background:#d9d9d9;"></div><div class="b" style="left:1264.9px;top:587.0px;width:45.09999999999991px;background:#dbd6d6;"><span style="left:5.099999999999909px">o…e</span></div><div class="b" style="left:1224px;top:614.5px;width:38.700000000000045px;background:#d9d9d9;"></div><div class="b" style="left:1264.9px;top:614.5px;width:45.09999999999991px;background:#dbd6d6;"><span style="left:5.099999999999909px">o…></span></div><div class="b" style="left:1269px;top:642.0px;width:32px;background:#d9d9d9;"></div><div class="b" style="left:1312px;top:532.0px;width:5px;background:#d9d9d9;"></div><div class="b" style="left:1318px;top:532.0px;width:3px;background:#e6e6e6;"></div><div class="b" style="left:1322px;top:532.0px;width:2px;background:#e6e6e6;"></div><div class="b" style="left:1326px;top:532.0px;width:2px;background:#e6e6e6;"></div><div class="b" style="left:1330px;top:532.0px;width:2px;background:#e6e6e6;"></div><div class="b" style="left:1334px;top:532.0px;width:2px;background:#e6e6e6;"></div><div class="b" style="left:1338.5px;top:532.0px;width:6.5px;background:#d9d9d9;"></div><div class="b" style="left:1312px;top:559.5px;width:5px;background:#d9d9d9;"></div><div class="b" style="left:1318px;top:559.5px;width:3.5px;background:#e6e6e6;"></div><div class="b" style="left:1322.5px;top:559.5px;width:1.0px;background:#e6e6e6;"></div><div class="b" style="left:1330px;top:559.5px;width:1px;background:#e6e6e6;"></div><div class="b" style="left:1336px;top:559.5px;width:1px;background:#e6e6e6;"></div><div class="b" style="left:1346px;top:559.5px;width:4px;background:#e6e6e6;"></div><div class="b" style="left:1352px;top:559.5px;width:18px;background:#d9d9d9;"></div><div class="b" style="left:1312px;top:587.0px;width:5px;background:#d9d9d9;"></div><div class="b" style="left:1318px;top:587.0px;width:3.5px;background:#e6e6e6;"></div><div class="b" style="left:1322.5px;top:587.0px;width:1.0px;background:#e6e6e6;"></div><div class="b" style="left:1330px;top:587.0px;width:1px;background:#e6e6e6;"></div><div class="b" style="left:1336px;top:587.0px;width:1px;background:#e6e6e6;"></div><div class="b" style="left:1346px;top:587.0px;width:4px;background:#e6e6e6;"></div><div class="b" style="left:1352px;top:587.0px;width:18px;background:#d9d9d9;"></div><div class="b" style="left:1312px;top:614.5px;width:5px;background:#d9d9d9;"></div><div class="b" style="left:1318px;top:614.5px;width:3.5px;background:#e6e6e6;"></div><div class="b" style="left:1322.5px;top:614.5px;width:1.0px;background:#e6e6e6;"></div><div class="b" style="left:1330px;top:614.5px;width:1px;background:#e6e6e6;"></div><div class="b" style="left:1336px;top:614.5px;width:1px;background:#e6e6e6;"></div><div class="b" style="left:1346px;top:614.5px;width:4px;background:#e6e6e6;"></div><div class="b" style="left:1352px;top:614.5px;width:18px;background:#d9d9d9;"></div><div class="b" style="left:1318px;top:642.0px;width:2px;background:#e6e6e6;"></div><div class="b" style="left:1330px;top:642.0px;width:1px;background:#e6e6e6;"></div><div class="b" style="left:1336px;top:642.0px;width:1px;background:#e6e6e6;"></div><div class="b" style="left:1346px;top:642.0px;width:4px;background:#e6e6e6;"></div><div class="b" style="left:1352px;top:642.0px;width:10px;background:#d9d9d9;"></div><div class="b" style="left:1364px;top:642.0px;width:6px;background:#d9d9d9;"></div><div class="b" style="left:1372px;top:642.0px;width:4px;background:#d9d9d9;"></div><div class="b" style="left:1378px;top:642.0px;width:5px;background:#d9d9d9;"></div><div class="b" style="left:1385px;top:642.0px;width:15px;background:#d9d9d9;"></div><div class="b" style="left:1402px;top:642.0px;width:18px;background:#d9d9d9;"></div><div class="b" style="left:1422px;top:642.0px;width:18px;background:#d9d9d9;"></div><div class="b" style="left:1442px;top:642.0px;width:14px;background:#d9d9d9;"></div><div class="b" style="left:1460px;top:642.0px;width:10px;background:#e6e6e6;"></div><div class="b" style="left:1474px;top:642.0px;width:26px;background:#e6e6e6;"></div><div class="b" style="left:1345.3px;top:532.0px;width:202.20000000000005px;background:#d4dbd5;"><span style="left:6.7000000000000455px">android.app…nchActivity</span></div><div class="b" style="left:1372.6px;top:559.5px;width:9.900000000000091px;background:#d9d9d9;"></div><div class="b" style="left:1384px;top:559.5px;width:8px;background:#d9d9d9;"></div><div class="b" style="left:1372px;top:587.0px;width:4px;background:#e6e6e6;"></div><div class="b" style="left:1378px;top:587.0px;width:5px;background:#d9d9d9;"></div><div class="b" style="left:1385px;top:587.0px;width:7px;background:#d9d9d9;"></div><div class="b" style="left:1372px;top:614.5px;width:5px;background:#d9d9d9;"></div><div class="b" style="left:1378px;top:614.5px;width:4px;background:#e6e6e6;"></div><div class="b" style="left:1384px;top:614.5px;width:8px;background:#d9d9d9;"></div><div class="b" style="left:1394px;top:559.5px;width:154px;background:#d9d9d9;"><span style="left:5px">android.…OnCreate</span></div><div class="b" style="left:1394px;top:587.0px;width:154px;background:#d9d9d9;"><span style="left:5px">android.…rmCreate</span></div><div class="b" style="left:1394px;top:614.5px;width:64px;background:#d9d9d9;"><span style="left:5px">or…te</span></div><div class="b" style="left:1460px;top:614.5px;width:27px;background:#d9d9d9;"></div><div class="b" style="left:1488.5px;top:614.5px;width:57.0px;background:#d9d9d9;"><span style="left:5.5px">or…e</span></div><div class="b" style="left:1503px;top:642.0px;width:40px;background:#d9d9d9;"><span style="left:6px">a…</span></div>
</div></div>
<div class="abs" style="left:117px;top:178px;width:1px;height:489px;background:rgba(0,0,0,0.095)"></div><div class="abs" style="left:236px;top:178px;width:1px;height:489px;background:rgba(0,0,0,0.095)"></div><div class="abs" style="left:342px;top:178px;width:1px;height:489px;background:rgba(0,0,0,0.095)"></div><div class="abs" style="left:460px;top:178px;width:1px;height:489px;background:rgba(0,0,0,0.095)"></div><div class="abs" style="left:566px;top:178px;width:1px;height:489px;background:rgba(0,0,0,0.095)"></div><div class="abs" style="left:685px;top:178px;width:1px;height:489px;background:rgba(0,0,0,0.095)"></div><div class="abs" style="left:790px;top:178px;width:1px;height:489px;background:rgba(0,0,0,0.095)"></div><div class="abs" style="left:896px;top:178px;width:1px;height:489px;background:rgba(0,0,0,0.095)"></div><div class="abs" style="left:1015px;top:178px;width:1px;height:489px;background:rgba(0,0,0,0.095)"></div><div class="abs" style="left:1120px;top:178px;width:1px;height:489px;background:rgba(0,0,0,0.095)"></div><div class="abs" style="left:1239px;top:178px;width:1px;height:489px;background:rgba(0,0,0,0.095)"></div><div class="abs" style="left:1345px;top:178px;width:1px;height:489px;background:rgba(0,0,0,0.095)"></div><div class="abs" style="left:1463px;top:178px;width:1px;height:489px;background:rgba(0,0,0,0.095)"></div><div class="abs" style="left:1569px;top:178px;width:1px;height:489px;background:rgba(0,0,0,0.095)"></div><div class="abs" style="left:1675px;top:178px;width:1px;height:489px;background:rgba(0,0,0,0.095)"></div><div class="abs" style="left:1793px;top:178px;width:1px;height:489px;background:rgba(0,0,0,0.095)"></div><div class="abs" style="left:1899px;top:178px;width:1px;height:489px;background:rgba(0,0,0,0.095)"></div><div class="abs" style="left:12px;top:178px;width:1px;height:489px;background:rgba(0,0,0,0.07)"></div>
<div class="abs" style="left:880.7px;top:581.1px;width:374.5px;height:79.6px;background:#fff;border:1px solid #c4c4c4;box-shadow:-1px 1px 3px rgba(0,0,0,0.22)"></div>
<div class="tt" style="top:589.5px">org.thoughtcrime.securesms.MockSdk.initialize</div>
<div class="tt" style="top:606.8px;color:#8cb293">package: org.thoughtcrime.securesms</div>
<div class="tt" style="top:624.1px">duration: 300.1ms</div>
<div class="tt" style="top:641.4px">change: 23.5%</div>
<div class="abs" style="left:350.5px;top:284.7px;width:18.7px;height:25.5px;background:#4b4545;border-radius:1px"></div>
<svg class="abs" style="left:354px;top:293px" width="12" height="12"><path d="M6.15 3.9 L9.9 10.9 L2.4 10.9 Z" fill="none" stroke="#2a2626" stroke-width="1.05"/><path d="M6.15 6.6 L6.15 8.8" stroke="#2a2626" stroke-width="0.8"/></svg>
<div class="abs" style="left:350.3px;top:304.5px;width:1.3px;height:285.5px;background:repeating-linear-gradient(to bottom,#4a4545 0 10px,transparent 10px 19.6px)"></div>
</div></body></html>
